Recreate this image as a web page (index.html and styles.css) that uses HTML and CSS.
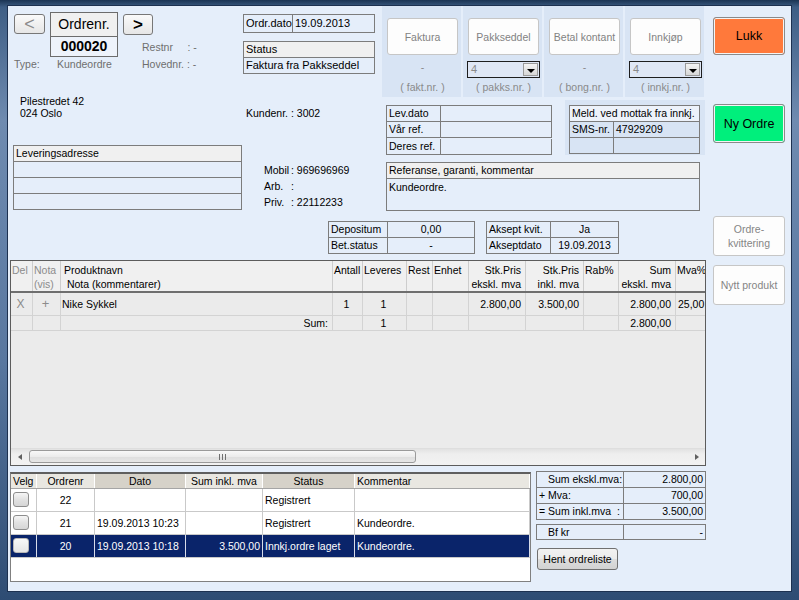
FILE: index.html
```html
<!DOCTYPE html>
<html>
<head>
<meta charset="utf-8">
<title>Ordre</title>
<link rel="stylesheet" href="styles.css">
</head>
<body>
<div class="window">
  <div class="client">
    <div class="main">
      <div class="top">
        <div class="col-l">
          <div class="nav">
            <button class="navbtn prev">&lt;</button>
            <div class="ordrenr">
              <div class="ordrenr-lbl">Ordrenr.</div>
              <div class="ordrenr-val">000020</div>
            </div>
            <div class="nav-r">
              <button class="navbtn next">&gt;</button>
              <div class="meta restnr">Restnr&nbsp;&nbsp;&nbsp;&nbsp;&nbsp;: -</div>
            </div>
          </div>
          <div class="typerow meta"><span class="t1">Type:</span><span class="t2">Kundeordre</span><span>Hovednr. : -</span></div>
          <div class="addr">Pilestredet 42<br>024 Oslo</div>
          <div class="box levadr">
            <div class="hd">Leveringsadresse</div>
            <div></div>
            <div></div>
            <div></div>
          </div>
        </div>

        <div class="col-m">
          <div class="box ordrdato">
            <div>Ordr.dato</div><div>19.09.2013</div>
          </div>
          <div class="box status">
            <div class="hd">Status</div>
            <div>Faktura fra Pakkseddel</div>
          </div>
          <div class="kundenr">Kundenr. : 3002</div>
          <div class="phones">
            <span>Mobil</span><span>: 969696969</span>
            <span>Arb.</span><span>:</span>
            <span>Priv.</span><span>: 22112233</span>
          </div>
        </div>

        <div class="col-r">
          <div class="panel">
            <div class="pcol">
              <button class="pbtn">Faktura</button>
              <div class="pmid">-</div>
              <div class="plbl">( fakt.nr. )</div>
            </div>
            <div class="pcol">
              <button class="pbtn">Pakkseddel</button>
              <div class="dd"><span class="dd-val">4</span><span class="dd-btn"><i></i></span></div>
              <div class="plbl">( pakks.nr. )</div>
            </div>
            <div class="pcol">
              <button class="pbtn">Betal kontant</button>
              <div class="pmid">-</div>
              <div class="plbl">( bong.nr. )</div>
            </div>
            <div class="pcol">
              <button class="pbtn">Innkjøp</button>
              <div class="dd"><span class="dd-val">4</span><span class="dd-btn"><i></i></span></div>
              <div class="plbl">( innkj.nr. )</div>
            </div>
          </div>
          <div class="row2">
            <div class="box levbox">
              <div>Lev.dato</div><div></div>
              <div>Vår ref.</div><div></div>
              <div>Deres ref.</div><div></div>
            </div>
            <div class="meldpanel">
              <div class="box meldbox">
                <div class="hd span">Meld. ved mottak fra innkj.</div>
                <div>SMS-nr.</div><div>47929209</div>
                <div></div><div></div>
              </div>
            </div>
          </div>
          <div class="box refbox">
            <div class="hd">Referanse, garanti, kommentar</div>
            <div class="refbody">Kundeordre.</div>
          </div>
        </div>
      </div>

      <div class="deprow">
        <div class="box depbox">
          <div>Depositum</div><div class="c">0,00</div>
          <div>Bet.status</div><div class="c">-</div>
        </div>
        <div class="box akseptbox">
          <div>Aksept kvit.</div><div class="c">Ja</div>
          <div>Akseptdato</div><div class="c">19.09.2013</div>
        </div>
      </div>

      <div class="grid">
        <div class="gcols ghead">
          <div class="gray">Del</div>
          <div class="gray">Nota<br>(vis)</div>
          <div class="pn">Produktnavn<br>&nbsp;Nota (kommentarer)</div>
          <div>Antall</div>
          <div>Leveres</div>
          <div>Rest</div>
          <div>Enhet</div>
          <div class="r">Stk.Pris<br>ekskl. mva</div>
          <div class="r">Stk.Pris<br>inkl. mva</div>
          <div>Rab%</div>
          <div class="r">Sum<br>ekskl. mva</div>
          <div>Mva%</div>
        </div>
        <div class="gcols grow">
          <div class="gray c x">X</div>
          <div class="gray c plus">+</div>
          <div class="pn">Nike Sykkel</div>
          <div class="c">1</div>
          <div class="c">1</div>
          <div></div>
          <div></div>
          <div class="r">2.800,00</div>
          <div class="r">3.500,00</div>
          <div></div>
          <div class="r">2.800,00</div>
          <div>25,00</div>
        </div>
        <div class="gcols grow sumrow">
          <div></div>
          <div></div>
          <div class="r">Sum:</div>
          <div></div>
          <div class="c">1</div>
          <div></div>
          <div></div>
          <div></div>
          <div></div>
          <div></div>
          <div class="r">2.800,00</div>
          <div></div>
        </div>
        <div class="hscroll">
          <div class="hs-arrow"><i class="tri-l"></i></div>
          <div class="hs-thumb"><span class="grip"></span></div>
          <div class="hs-track"></div>
          <div class="hs-arrow"><i class="tri-r"></i></div>
        </div>
      </div>

      <div class="bottom">
        <div class="list">
          <div class="lcols lhead">
            <div class="hl">Velg</div>
            <div class="hl c">Ordrenr</div>
            <div class="hd2 c">Dato</div>
            <div class="hl c">Sum inkl. mva</div>
            <div class="hd2 c">Status</div>
            <div class="hl">Kommentar</div>
          </div>
          <div class="lcols lrow">
            <div><span class="chk"></span></div>
            <div class="c">22</div>
            <div></div>
            <div></div>
            <div>Registrert</div>
            <div></div>
          </div>
          <div class="lcols lrow">
            <div><span class="chk"></span></div>
            <div class="c">21</div>
            <div>19.09.2013 10:23</div>
            <div></div>
            <div>Registrert</div>
            <div>Kundeordre.</div>
          </div>
          <div class="lcols lrow sel">
            <div><span class="chk"></span></div>
            <div class="c">20</div>
            <div>19.09.2013 10:18</div>
            <div class="r">3.500,00</div>
            <div>Innkj.ordre laget</div>
            <div>Kundeordre.</div>
          </div>
        </div>
        <div class="sums">
          <div class="box sumbox">
            <div class="ind">Sum ekskl.mva:</div><div class="r">2.800,00</div>
            <div>+ Mva:</div><div class="r">700,00</div>
            <div>= Sum inkl.mva&nbsp;&nbsp;:</div><div class="r">3.500,00</div>
          </div>
          <div class="box bfbox">
            <div class="ind">Bf kr</div><div class="r">-</div>
          </div>
          <button class="hent">Hent ordreliste</button>
        </div>
      </div>
    </div>

    <div class="side">
      <button class="bigbtn lukk">Lukk</button>
      <button class="bigbtn nyordre">Ny Ordre</button>
      <button class="bigbtn dis kvitt">Ordre-<br>kvittering</button>
      <button class="bigbtn dis nytt">Nytt produkt</button>
    </div>
  </div>
</div>
</body>
</html>
```

FILE: styles.css
```css
* { box-sizing: border-box; }
html, body { margin: 0; padding: 0; }
body {
  width: 799px;
  height: 600px;
  overflow: hidden;
  font-family: "Liberation Sans", Arial, sans-serif;
  font-size: 10.5px;
  color: #000;
  background: #2c4668;
}
button {
  font-family: "Liberation Sans", Arial, sans-serif;
  font-size: 10.5px;
  padding: 0;
  margin: 0;
  cursor: default;
}

.window {
  width: 799px;
  height: 600px;
  padding: 6px 8px 9px 8px;
  background: linear-gradient(180deg, #1b3453 0, #3e5e85 1.2%, #6f8bb0 20%, #5877a0 60%, #2e4c73 100%);
}
.client {
  width: 783px;
  height: 585px;
  background: #e5eefa;
  display: flex;
  box-shadow: 0 0 0 1px #1d3150;
}

/* main column */
.main { width: 700px; display: flex; flex-direction: column; }
.top { display: flex; }
.col-l { width: 235px; }
.col-m { width: 139px; }
.col-r { width: 326px; }

/* nav block */
.nav { display: flex; margin-top: 6px; height: 45px; }
.navbtn {
  width: 31px;
  height: 20px;
  margin: 2px 0 0 6px;
  border: 1px solid #777;
  border-radius: 3px;
  background: linear-gradient(#fafafa, #f0f0f0 50%, #e6e6e6);
  font-size: 18px;
  line-height: 16px;
  color: #8a8a8a;
}
.next { width: 30px; height: 21px; margin-left: 0; color: #000; font-weight: bold; font-size: 17px; }
.ordrenr {
  margin-left: 5px;
  width: 68px;
  height: 45px;
  border: 1px solid #6c6c6c;
}
.ordrenr-lbl {
  height: 24px;
  background: #f0f0f0;
  border-bottom: 1px solid #6c6c6c;
  font-size: 14px;
  line-height: 23px;
  text-align: center;
}
.ordrenr-val {
  height: 19px;
  font-size: 14px;
  font-weight: bold;
  line-height: 19px;
  text-align: center;
  background: #eef3fb;
}
.nav-r { margin-left: 5px; display: flex; flex-direction: column; }
.meta { color: #6e6e6e; }
.restnr { margin: 6px 0 0 19px; line-height: 13px; white-space: nowrap; }
.typerow { margin-top: 1px; line-height: 13px; padding-left: 6px; display: flex; white-space: nowrap; }
.typerow .t1 { width: 43px; }
.typerow .t2 { width: 85px; }
.addr { margin-top: 24px; padding-left: 12px; line-height: 12px; }

/* boxes */
.box {
  display: grid;
  border-top: 1px solid #7c7c7c;
  border-left: 1px solid #7c7c7c;
}
.box > div {
  height: 16px;
  line-height: 15px;
  padding: 0 2px;
  border-right: 1px solid #7c7c7c;
  border-bottom: 1px solid #7c7c7c;
  white-space: nowrap;
  overflow: hidden;
}
.box .hd { background: #f0f0f0; }
.box .span { grid-column: 1 / -1; }
.box .c { text-align: center; }
.box .r { text-align: right; }

.levadr { margin: 26px 0 0 5px; width: 229px; grid-template-columns: 1fr; }

.ordrdato { margin-top: 8px; width: 132px; grid-template-columns: 49px 1fr; }
.ordrdato > div { height: 18px; line-height: 16px; font-size: 11px; }
.status { margin-top: 8px; width: 132px; grid-template-columns: 1fr; }
.status > div { font-size: 11px; }
.kundenr { margin-top: 33px; padding-left: 3px; line-height: 12px; }
.phones {
  margin-top: 43px;
  padding-left: 21px;
  line-height: 16px;
  display: grid;
  grid-template-columns: 27px auto;
}

/* button panel */
.panel { display: flex; gap: 2px; height: 91px; }
.pcol { width: 79px; background: #d8e4f4; display: flex; flex-direction: column; }
.pbtn {
  margin: 12px 0 0 5px;
  width: 71px;
  height: 37px;
  background: #fdfdfd;
  border: 1px solid #c6c6c6;
  border-radius: 3px;
  color: #828282;
  white-space: nowrap;
  overflow: hidden;
}
.pmid {
  margin: 6px 0 0 5px;
  width: 71px;
  height: 17px;
  line-height: 13px;
  text-align: center;
  color: #8a8a8a;
}
.dd {
  margin: 6px 0 0 4px;
  width: 73px;
  height: 17px;
  border: 1px solid #1e1e1e;
  background: #dfe7f5;
  display: flex;
  justify-content: space-between;
}
.dd-val { color: #8a8a8a; padding-left: 3px; line-height: 15px; font-size: 11px; }
.dd-btn {
  width: 15px;
  height: 13px;
  margin: 1px 1px 0 0;
  background: linear-gradient(#f4f4f4, #d6d6d6);
  border: 1px solid #9a9a9a;
  display: flex;
  align-items: center;
  justify-content: center;
}
.dd-btn i {
  width: 0;
  height: 0;
  border-left: 4px solid transparent;
  border-right: 4px solid transparent;
  border-top: 4px solid #000;
  margin-top: 2px;
}
.plbl {
  margin: 3px 0 0 5px;
  width: 71px;
  line-height: 12px;
  text-align: center;
  color: #8a8a8a;
  white-space: nowrap;
}

.row2 { display: flex; }
.levbox { margin: 8px 0 0 4px; width: 166px; grid-template-columns: 54px 1fr; }
.meldpanel {
  margin: 3px 0 0 13px;
  width: 140px;
  height: 55px;
  background: #d8e4f4;
  padding: 5px 0 0 4px;
}
.meldbox { width: 131px; grid-template-columns: 44px 1fr; }
.meldbox .hd { background: #edf2fa; }
.refbox { margin: 7px 0 0 4px; width: 314px; grid-template-columns: 1fr; }
.refbox .refbody { height: 32px; line-height: 16px; }

.deprow { display: flex; margin-top: 10px; padding-left: 320px; }
.depbox { width: 147px; grid-template-columns: 59px 1fr; }
.akseptbox { margin-left: 11px; width: 133px; grid-template-columns: 64px 1fr; }

/* product grid */
.grid {
  margin: 6px 0 0 2px;
  width: 696px;
  height: 206px;
  border: 1px solid #5c5c5c;
  background: #ebebeb;
  display: flex;
  flex-direction: column;
  overflow: hidden;
}
.gcols {
  display: grid;
  grid-template-columns: 22px 28px 272px 30px 44px 26px 36px 57px 58px 35px 57px 40px;
  width: 705px;
  flex: none;
}
.ghead {
  height: 32px;
  background: #f0f0f0;
  border-bottom: 2px solid #6e6e6e;
}
.ghead > div {
  border-right: 1px solid #cdcdcd;
  padding: 2px 4px 0 1px;
  line-height: 14px;
  white-space: nowrap;
  overflow: hidden;
}
.ghead > div.pn { padding-left: 3px; }
.gcols .r { text-align: right; }
.gcols .c { text-align: center; }
.gray { color: #8c8c8c; }
.grow { height: 23px; border-bottom: 1px solid #d3d3d3; }
.grow > div {
  border-right: 1px solid #d3d3d3;
  line-height: 22px;
  padding: 0 4px 0 2px;
  white-space: nowrap;
  overflow: hidden;
}
.grow > div.pn { padding-left: 1px; }
.grow .x { font-size: 12px; }
.grow .plus { font-size: 13px; }
.sumrow { height: 15px; }
.sumrow > div { line-height: 15px; }

.hscroll {
  margin-top: auto;
  height: 17px;
  display: flex;
  background: linear-gradient(#e2e2e2, #eeeeee 30%, #f2f2f2);
  border-top: 1px solid #dedede;
  flex: none;
}
.hs-arrow { width: 17px; display: flex; align-items: center; justify-content: center; }
.tri-l, .tri-r { width: 0; height: 0; border-top: 3.5px solid transparent; border-bottom: 3.5px solid transparent; }
.tri-l { border-right: 4px solid #606060; }
.tri-r { border-left: 4px solid #606060; }
.hs-thumb {
  margin: 1px 0 0 1px;
  width: 387px;
  height: 13px;
  border: 1px solid #9a9a9a;
  border-radius: 3px;
  background: linear-gradient(#f8f8f8, #ececec 50%, #dedede 51%, #e6e6e6);
  display: flex;
  align-items: center;
  justify-content: center;
}
.grip {
  width: 7px;
  height: 6px;
  background: repeating-linear-gradient(90deg, #707070 0, #707070 1px, transparent 1px, transparent 3px);
}
.hs-track { flex: 1; }

/* bottom list */
.bottom { display: flex; align-items: flex-start; margin-top: 5px; padding-left: 2px; }
.list {
  margin-top: 1px;
  width: 521px;
  height: 110px;
  border: 1px solid #808080;
  border-top: 2px solid #5f5f5f;
  background: #fff;
}
.lcols { display: grid; grid-template-columns: 26px 58px 91px 77px 92px 1fr; }
.lhead { height: 15px; border-bottom: 1px solid #a5a5a5; }
.lhead > div {
  line-height: 14px;
  padding: 0 2px;
  border-right: 1px solid #fff;
  white-space: nowrap;
  overflow: hidden;
}
.lhead .hl { background: #e9e7e1; }
.lhead .hd2 { background: #d6d2c9; }
.lcols .c { text-align: center; }
.lcols .r { text-align: right; }
.lrow { height: 23px; border-bottom: 1px solid #c9c9c9; }
.lrow > div {
  border-right: 1px solid #c9c9c9;
  line-height: 22px;
  padding: 0 2px;
  white-space: nowrap;
  overflow: hidden;
}
.lrow > div:first-child { padding: 3px 0 0 2px; }
.chk {
  display: block;
  width: 16px;
  height: 15px;
  border: 1px solid #8d8d8d;
  border-radius: 3px;
  background: linear-gradient(#f6f6f6, #e2e2e2 50%, #d6d6d6);
}
.sel { background: #0a246a; color: #fff; }
.sel > div { border-right-color: #d8dcea; }
.sel .chk { background: linear-gradient(#f8f8f8, #e6e6e6); border-color: #b8b8b8; }

.sums { margin-left: 5px; width: 170px; }
.sumbox { grid-template-columns: 87px 1fr; }
.sumbox > div.ind, .bfbox > div.ind { padding-left: 11px; }
.bfbox { margin-top: 4px; grid-template-columns: 87px 1fr; }
.bfbox > div { height: 15px; line-height: 14px; }
.hent {
  margin: 8px 0 0 1px;
  width: 81px;
  height: 22px;
  border: 1px solid #707070;
  border-radius: 3px;
  background: linear-gradient(#f2f2f2, #ebebeb 50%, #dddddd 51%, #d2d2d2);
  color: #000;
}

/* side buttons */
.side { width: 83px; padding-left: 5px; display: flex; flex-direction: column; }
.bigbtn {
  width: 72px;
  border: 1px solid #8a8a8a;
  border-radius: 3px;
  box-shadow: inset 0 0 0 1px #f4f4f4;
  font-size: 12.5px;
  color: #000;
}
.lukk { margin-top: 11px; height: 38px; background: #ff793b; }
.nyordre { margin-top: 49px; height: 39px; background: #00ef7c; }
.dis {
  background: #fdfdfd;
  border-color: #c6c6c6;
  box-shadow: none;
  color: #858585;
  font-size: 10.5px;
  line-height: 14px;
}
.kvitt { margin-top: 73px; height: 40px; }
.nytt { margin-top: 9px; height: 40px; }
```
